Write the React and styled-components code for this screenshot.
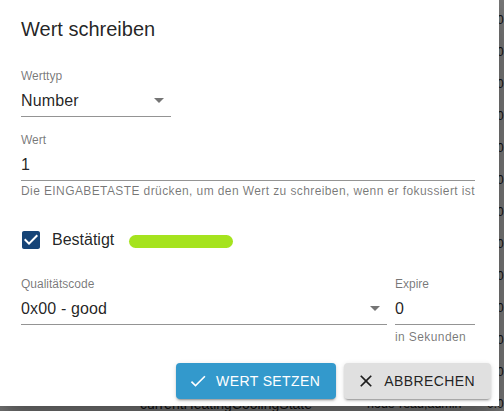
import React from "react";
import styled, { createGlobalStyle } from "styled-components";

const Global = createGlobalStyle`
  html, body { margin: 0; padding: 0; }
  body {
    font-family: "Liberation Sans", Arial, sans-serif;
    background: #7a7a7a;
    overflow: hidden;
  }
`;

const Page = styled.div`
  position: relative;
  width: 504px;
  height: 411px;
  overflow: hidden;
  background: #7a7a7a;
`;

const Table = styled.div`
  display: flex;
  flex-direction: column;
  padding-top: 4px;
`;

const Row = styled.div`
  display: flex;
  align-items: center;
  height: 32px;
  color: #111;
  white-space: nowrap;
`;

const NameCell = styled.div`
  margin-left: 140px;
  width: 227px;
  font-size: 14px;
`;

const RoleCell = styled.div`
  width: 120px;
  font-size: 12.5px;
`;

const ValueCell = styled.div`
  font-size: 12px;
`;

const Dialog = styled.div`
  position: absolute;
  top: 0;
  left: 0;
  width: 499px;
  height: 406px;
  background: #fff;
  display: flex;
  flex-direction: column;
  box-sizing: border-box;
  box-shadow: 0 11px 15px -7px rgba(0, 0, 0, 0.2),
    0 24px 38px 3px rgba(0, 0, 0, 0.14), 0 9px 46px 8px rgba(0, 0, 0, 0.12);
  color: rgba(0, 0, 0, 0.87);
`;

const Title = styled.h2`
  margin: 0;
  padding: 13px 24px 0 21px;
  font-size: 20px;
  line-height: 32px;
  font-weight: 400;
  color: rgba(0, 0, 0, 0.87);
`;

const Content = styled.div`
  display: flex;
  flex-direction: column;
  padding: 0 24px 0 21px;
`;

const Field = styled.div`
  display: flex;
  flex-direction: column;
  width: ${(p) => (p.$width ? `${p.$width}px` : "auto")};
  flex: ${(p) => (p.$grow ? "1 1 auto" : "0 0 auto")};
  margin-top: ${(p) => p.$top || 0}px;
`;

const Label = styled.label`
  font-size: 12px;
  line-height: 16px;
  color: rgba(0, 0, 0, 0.54);
`;

const InputBox = styled.div`
  position: relative;
  padding: 7px ${(p) => (p.$select ? "24px" : "0")} 6px 0;
  border-bottom: 1px solid rgba(0, 0, 0, 0.42);
  font-size: 16px;
  line-height: 19px;
  letter-spacing: 0.15px;
  color: rgba(0, 0, 0, 0.87);
`;

const ArrowIcon = styled.svg`
  position: absolute;
  right: 0;
  top: calc(50% - 12px);
  width: 24px;
  height: 24px;
  fill: rgba(0, 0, 0, 0.54);
`;

const Helper = styled.p`
  margin: ${(p) => p.$top || 2}px 0 0;
  font-size: 12px;
  line-height: 16px;
  letter-spacing: 0.4px;
  color: rgba(0, 0, 0, 0.54);
  white-space: nowrap;
`;

const CheckRow = styled.div`
  display: flex;
  align-items: center;
  height: 24px;
  margin-top: 29px;
`;

const CheckIcon = styled.svg`
  width: 24px;
  height: 24px;
  margin-left: -2px;
  fill: #164477;
  flex: none;
`;

const CheckLabel = styled.span`
  margin-left: 9px;
  font-size: 16px;
  line-height: 24px;
  color: rgba(0, 0, 0, 0.87);
`;

const StatusBar = styled.div`
  margin-left: 15px;
  margin-top: 2px;
  width: 104px;
  height: 13px;
  border-radius: 7px;
  background: #a5e31e;
`;

const FieldRow = styled.div`
  display: flex;
  gap: 8px;
  margin-top: 24px;
  align-items: flex-start;
`;

const Actions = styled.div`
  margin-top: auto;
  display: flex;
  justify-content: flex-end;
  gap: 8px;
  padding: 8px 8px 7px;
`;

const Button = styled.button`
  display: inline-flex;
  align-items: center;
  height: 36px;
  box-sizing: border-box;
  padding: 6px 16px;
  border: 0;
  border-radius: 4px;
  font-family: "Liberation Sans", Arial, sans-serif;
  font-size: 14px;
  line-height: 24.5px;
  letter-spacing: 0.4px;
  text-transform: uppercase;
  font-weight: 400;
  background: ${(p) => (p.$primary ? "#3399cc" : "#e0e0e0")};
  color: ${(p) => (p.$primary ? "#fff" : "rgba(0,0,0,0.87)")};
  box-shadow: 0 3px 1px -2px rgba(0, 0, 0, 0.2), 0 2px 2px 0 rgba(0, 0, 0, 0.14),
    0 1px 5px 0 rgba(0, 0, 0, 0.12);
`;

const BtnIcon = styled.svg`
  width: 20px;
  height: 20px;
  margin-left: -4px;
  margin-right: 8px;
  fill: currentColor;
  flex: none;
`;

const Arrow = () => (
  <ArrowIcon viewBox="0 0 24 24">
    <path d="M7 10l5 5 5-5z" />
  </ArrowIcon>
);

export default function App() {
  const rows = Array.from({ length: 13 }, (_, i) => i);
  return (
    <>
      <Global />
      <Page>
        <Table>
          {rows.map((i) => (
            <Row key={i}>
              <NameCell>{i === 12 ? "currentHeatingCoolingState" : ""}</NameCell>
              <RoleCell>{i === 12 ? "node-read,admin" : ""}</RoleCell>
              <ValueCell>0.0</ValueCell>
            </Row>
          ))}
        </Table>
        <Dialog role="dialog">
          <Title>Wert schreiben</Title>
          <Content>
            <Field $width={150} $top={23}>
              <Label>Werttyp</Label>
              <InputBox $select>
                Number
                <Arrow />
              </InputBox>
            </Field>
            <Field $top={15}>
              <Label>Wert</Label>
              <InputBox>1</InputBox>
              <Helper $top={2}>
                Die EINGABETASTE drücken, um den Wert zu schreiben, wenn er fokussiert ist
              </Helper>
            </Field>
            <CheckRow>
              <CheckIcon viewBox="0 0 24 24">
                <path d="M19 3H5c-1.11 0-2 .9-2 2v14c0 1.1.89 2 2 2h14c1.11 0 2-.9 2-2V5c0-1.1-.89-2-2-2zm-9 14l-5-5 1.41-1.41L10 14.17l7.59-7.59L19 8l-9 9z" />
              </CheckIcon>
              <CheckLabel>Bestätigt</CheckLabel>
              <StatusBar />
            </CheckRow>
            <FieldRow>
              <Field $grow>
                <Label>Qualitätscode</Label>
                <InputBox $select>
                  0x00 - good
                  <Arrow />
                </InputBox>
              </Field>
              <Field $width={80}>
                <Label>Expire</Label>
                <InputBox>0</InputBox>
                <Helper $top={4}>in Sekunden</Helper>
              </Field>
            </FieldRow>
          </Content>
          <Actions>
            <Button $primary>
              <BtnIcon viewBox="0 0 24 24">
                <path d="M9 16.17 4.83 12l-1.42 1.41L9 19 21 7l-1.41-1.41z" />
              </BtnIcon>
              Wert setzen
            </Button>
            <Button>
              <BtnIcon viewBox="0 0 24 24">
                <path d="M19 6.41 17.59 5 12 10.59 6.41 5 5 6.41 10.59 12 5 17.59 6.41 19 12 13.41 17.59 19 19 17.59 13.41 12z" />
              </BtnIcon>
              Abbrechen
            </Button>
          </Actions>
        </Dialog>
      </Page>
    </>
  );
}
